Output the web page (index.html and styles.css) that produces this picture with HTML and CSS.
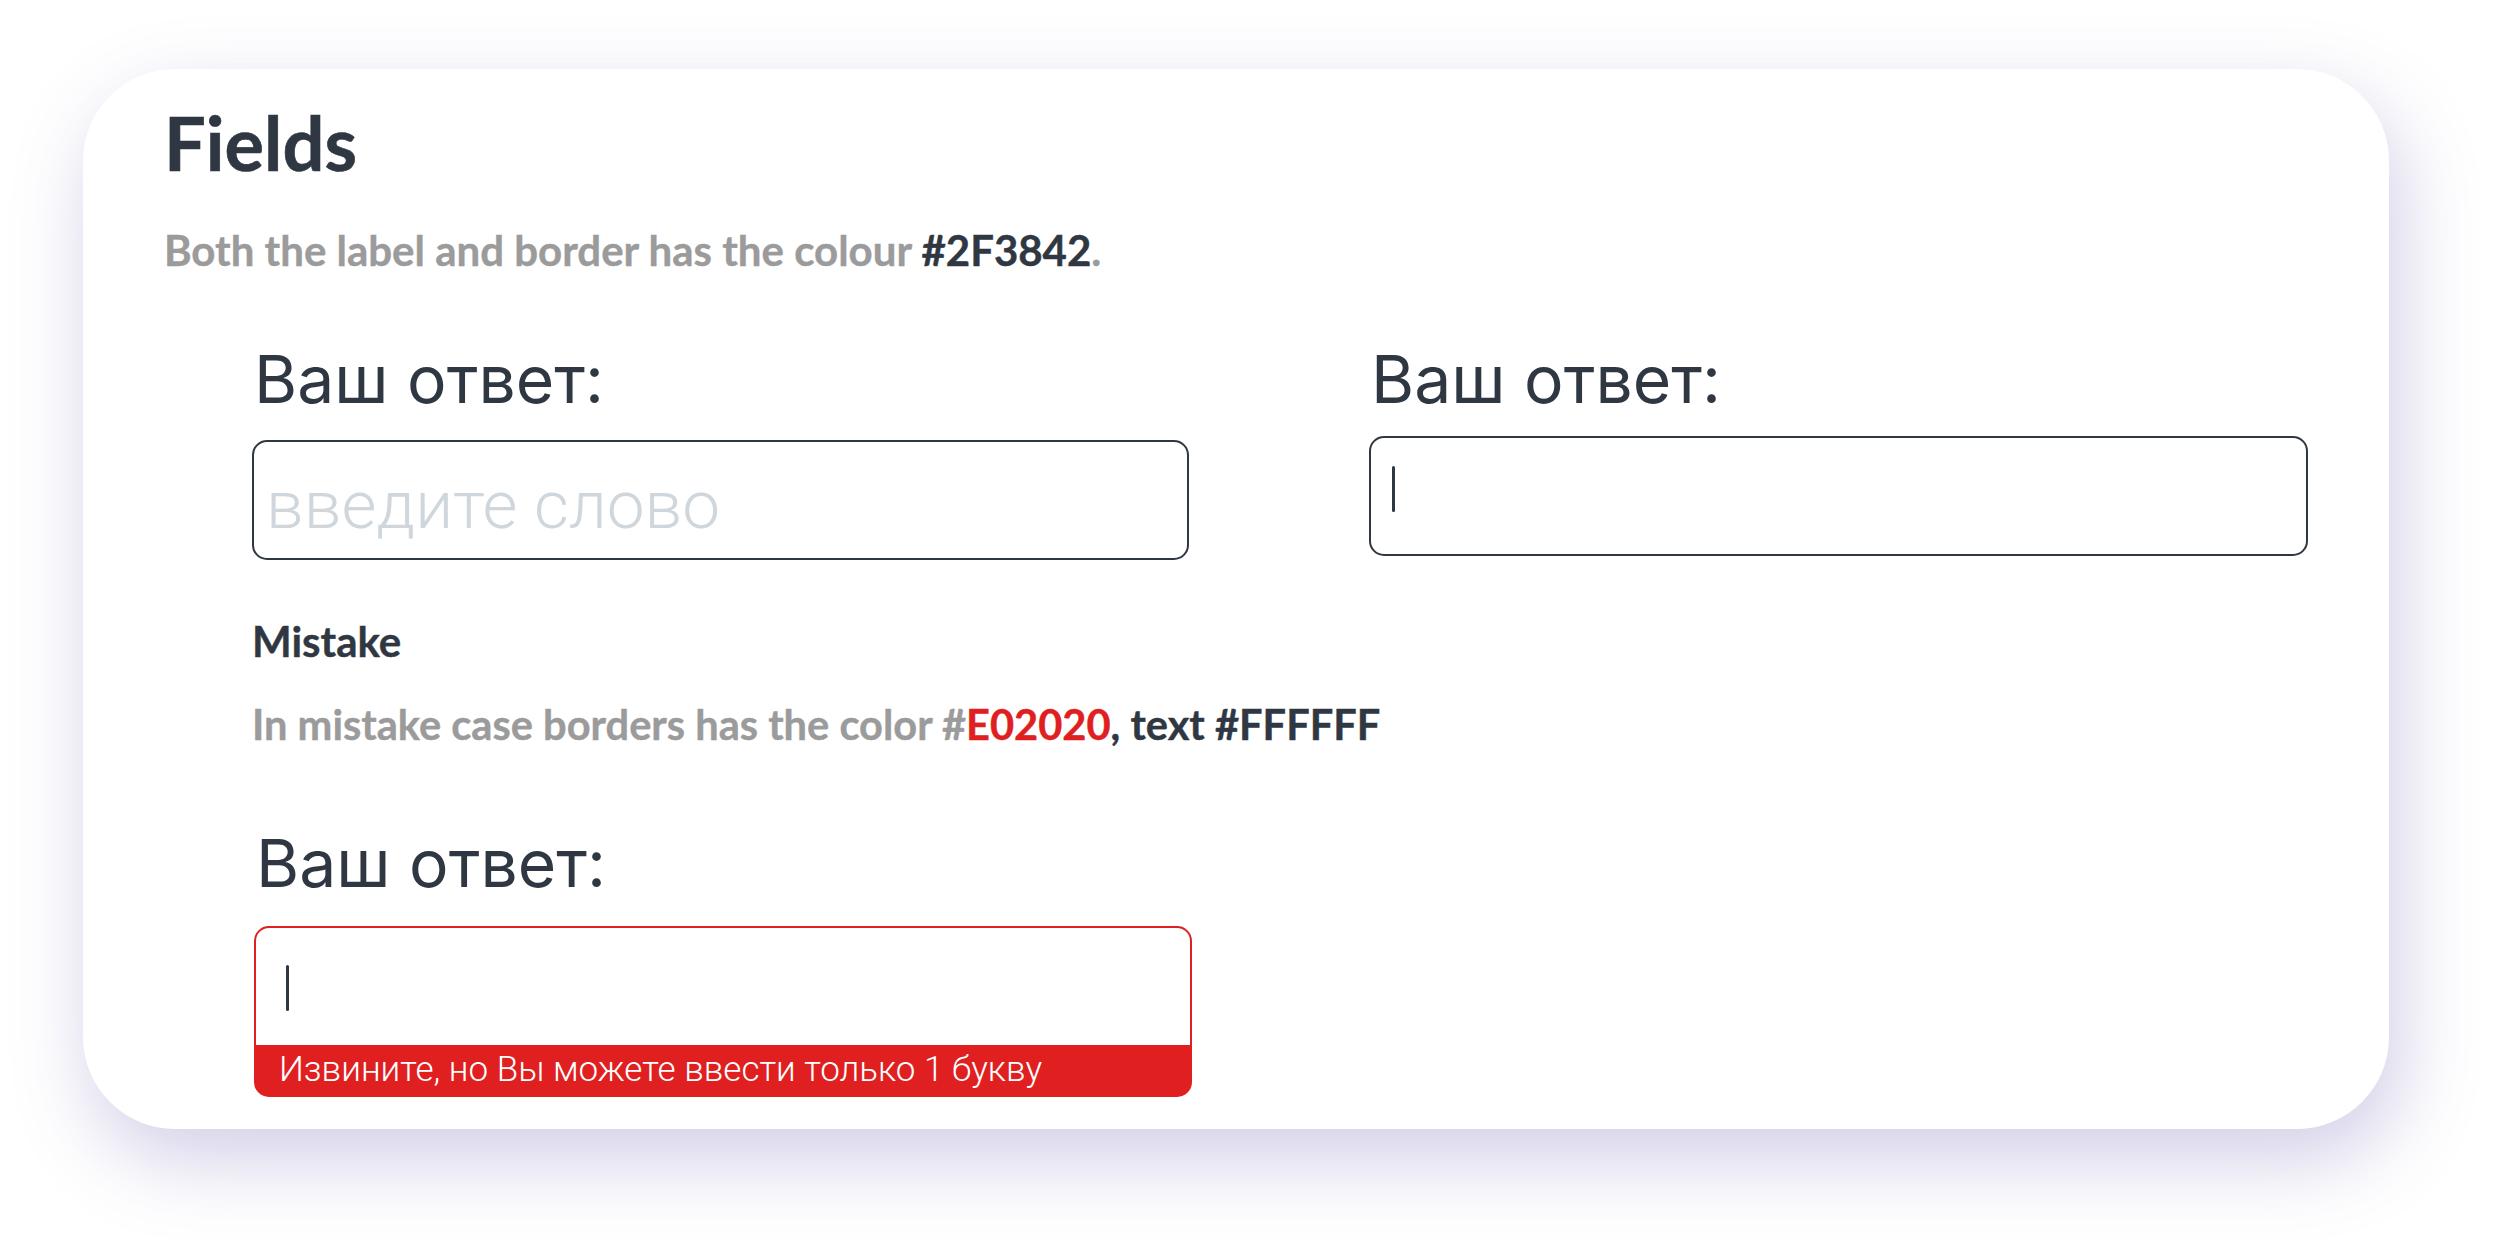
FILE: index.html
```html
<!DOCTYPE html>
<html lang="ru">
<head>
<meta charset="utf-8">
<title>Fields</title>
<link rel="stylesheet" href="styles.css">
</head>
<body>
<div class="page">
  <section class="card">
    <h1 class="title">Fields</h1>
    <p class="lead">Both the label and border has the colour <b class="dark">#2F3842</b>.</p>

    <div class="content">
      <div class="row">
        <div class="field">
          <div class="label">Ваш ответ:</div>
          <div class="box"><span class="placeholder">введите слово</span></div>
        </div>
        <div class="field field--up">
          <div class="label">Ваш ответ:</div>
          <div class="box box--active"><span class="caret"></span></div>
        </div>
      </div>

      <h2 class="subhead">Mistake</h2>
      <p class="note">In mistake case borders has the color #<b class="red">E02020</b><b class="dark">, text #FFFFFF</b></p>

      <div class="field field--error">
        <div class="label">Ваш ответ:</div>
        <div class="errbox">
          <div class="errbox__input"><span class="caret"></span></div>
          <div class="errbox__msg">Извините, но Вы можете ввести только 1 букву</div>
        </div>
      </div>
    </div>
  </section>
</div>
</body>
</html>
```

FILE: styles.css
```css
* { box-sizing: border-box; }
html, body { margin: 0; padding: 0; background: #ffffff; }
body { font-family: "Lato", "Liberation Sans", sans-serif; color: #2F3842; }

.page { padding: 69px 0 124px 83px; }

.card {
  width: 2306px;
  height: 1060px;
  background: #ffffff;
  border-radius: 92px;
  padding: 30px 81px 0 81px;
  box-shadow: 10px 30px 80px rgba(90, 80, 170, 0.28);
}

.title {
  margin: 0;
  font-family: "Lato", sans-serif;
  font-weight: 700;
  font-size: 74px;
  line-height: 1.2;
  color: #2F3842;
  -webkit-text-stroke: 0.6px #2F3842;
}

.lead {
  margin: 37px 0 0;
  font-family: "Lato", sans-serif;
  font-weight: 700;
  font-size: 42px;
  line-height: 1.2;
  color: #9B9B9B;
  -webkit-text-stroke: 0.4px currentColor;
}
.dark { color: #2F3842; font-weight: 700; }
.red { color: #E02020; font-weight: 700; }

.content { padding-left: 88px; margin-top: 65px; }

.row {
  display: grid;
  grid-template-columns: 937px 939px;
  column-gap: 180px;
}

.label {
  font-family: "Inter", "Noto Sans", sans-serif;
  font-weight: 400;
  font-size: 66px;
  line-height: 1.2;
  color: #2F3842;
  margin-bottom: 21px;
  padding-left: 2px;
}
.field--up .label { margin-bottom: 17px; }

.box {
  height: 120px;
  border: 2px solid #2F3842;
  border-radius: 15px;
  padding: 23px 12px 0;
}
.placeholder {
  font-family: "Roboto", sans-serif;
  font-weight: 300;
  font-size: 67.5px;
  line-height: normal;
  color: #CFD6DC;
}
.box--active { padding: 28px 21px 0; }

.caret {
  display: block;
  width: 3px;
  height: 46px;
  border-radius: 2px;
  background: #2F3842;
}

.subhead {
  margin: 56px 0 0;
  font-family: "Lato", sans-serif;
  font-weight: 700;
  font-size: 42px;
  line-height: 1.2;
  color: #2F3842;
  -webkit-text-stroke: 0.4px currentColor;
}

.note {
  margin: 33px 0 0;
  font-family: "Lato", sans-serif;
  font-weight: 700;
  font-size: 41.6px;
  line-height: 1.2;
  color: #9B9B9B;
  -webkit-text-stroke: 0.4px currentColor;
}

.field--error { margin-top: 74px; width: 940px; padding-left: 2px; }
.field--error .label { margin-bottom: 23px; }

.errbox {
  border: 2px solid #E02020;
  border-radius: 15px;
  overflow: hidden;
  background: #E02020;
}
.errbox__input {
  height: 117px;
  background: #ffffff;
  padding: 37px 30px 0;
}
.errbox__msg {
  height: 50px;
  padding-left: 23px;
  font-family: "Roboto", sans-serif;
  font-weight: 300;
  font-size: 35px;
  line-height: 50px;
  color: #ffffff;
  white-space: nowrap;
}
```
